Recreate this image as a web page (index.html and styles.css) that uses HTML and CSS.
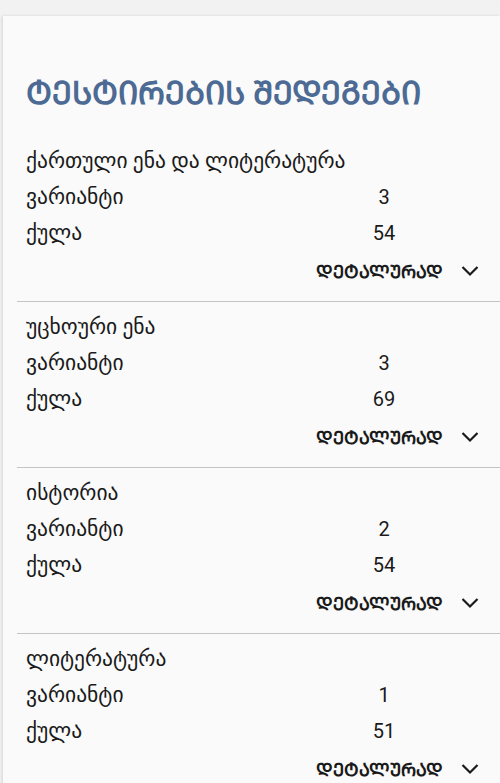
FILE: index.html
```html
<!DOCTYPE html>
<html lang="ka">
<head>
<meta charset="utf-8">
<link rel="stylesheet" href="styles.css">
</head>
<body>
<main class="card">
  <h1 class="title">&#x1CA2;&#x1C94;&#x1CA1;&#x1CA2;&#x1C98;&#x1CA0;&#x1C94;&#x1C91;&#x1C98;&#x1CA1; &#x1CA8;&#x1C94;&#x1C93;&#x1C94;&#x1C92;&#x1C94;&#x1C91;&#x1C98;</h1>

  <section class="result">
    <div class="subject">ქართული ენა და ლიტერატურა</div>
    <div class="row"><span class="label">ვარიანტი</span><span class="value">3</span></div>
    <div class="row"><span class="label">ქულა</span><span class="value">54</span></div>
    <div class="more"><span class="more-text">&#x1C93;&#x1C94;&#x1CA2;&#x1C90;&#x1C9A;&#x1CA3;&#x1CA0;&#x1C90;&#x1C93;</span><svg class="chev" viewBox="0 0 20 20" width="20" height="20"><path d="M2.5 6 L10 13.5 L17.5 6" fill="none" stroke="#1a1a1a" stroke-width="2.2"/></svg></div>
  </section>

  <section class="result">
    <div class="subject">უცხოური ენა</div>
    <div class="row"><span class="label">ვარიანტი</span><span class="value">3</span></div>
    <div class="row"><span class="label">ქულა</span><span class="value">69</span></div>
    <div class="more"><span class="more-text">&#x1C93;&#x1C94;&#x1CA2;&#x1C90;&#x1C9A;&#x1CA3;&#x1CA0;&#x1C90;&#x1C93;</span><svg class="chev" viewBox="0 0 20 20" width="20" height="20"><path d="M2.5 6 L10 13.5 L17.5 6" fill="none" stroke="#1a1a1a" stroke-width="2.2"/></svg></div>
  </section>

  <section class="result">
    <div class="subject">ისტორია</div>
    <div class="row"><span class="label">ვარიანტი</span><span class="value">2</span></div>
    <div class="row"><span class="label">ქულა</span><span class="value">54</span></div>
    <div class="more"><span class="more-text">&#x1C93;&#x1C94;&#x1CA2;&#x1C90;&#x1C9A;&#x1CA3;&#x1CA0;&#x1C90;&#x1C93;</span><svg class="chev" viewBox="0 0 20 20" width="20" height="20"><path d="M2.5 6 L10 13.5 L17.5 6" fill="none" stroke="#1a1a1a" stroke-width="2.2"/></svg></div>
  </section>

  <section class="result">
    <div class="subject">ლიტერატურა</div>
    <div class="row"><span class="label">ვარიანტი</span><span class="value">1</span></div>
    <div class="row"><span class="label">ქულა</span><span class="value">51</span></div>
    <div class="more"><span class="more-text">&#x1C93;&#x1C94;&#x1CA2;&#x1C90;&#x1C9A;&#x1CA3;&#x1CA0;&#x1C90;&#x1C93;</span><svg class="chev" viewBox="0 0 20 20" width="20" height="20"><path d="M2.5 6 L10 13.5 L17.5 6" fill="none" stroke="#1a1a1a" stroke-width="2.2"/></svg></div>
  </section>
</main>
</body>
</html>
```

FILE: styles.css
```css
html, body {
  margin: 0;
  padding: 0;
  background: #f2f2f2;
}
body {
  font-family: Roboto, "DejaVu Sans", sans-serif;
  color: #1a1a1a;
  overflow: hidden;
  height: 783px;
}
.card {
  margin: 16px 0 0 3px;
  background: #fafafa;
  box-shadow: -1px 0 3px rgba(0,0,0,0.12);
  padding: 57px 0 0 0;
  min-height: 800px;
}
.title {
  margin: 0 0 23px 23px;
  font-size: 32px;
  font-weight: bold;
  color: #4c6a93;
  line-height: 40px;
}
.result {
  margin-left: 14px;
  padding: 7px 0 10px 0;
  border-bottom: 1px solid #c4c4c4;
}
.subject, .row {
  height: 36px;
  line-height: 36px;
  font-size: 21.5px;
  padding-left: 9px;
}
.row {
  display: grid;
  grid-template-columns: 1fr 70px 81px;
}
.value {
  grid-column: 2;
  text-align: center;
  font-size: 20px;
}
.more {
  display: flex;
  justify-content: flex-end;
  align-items: center;
  height: 40px;
  padding-right: 20px;
  gap: 17px;
  font-size: 18px;
  font-weight: bold;
}
.chev { display: block; }
```
